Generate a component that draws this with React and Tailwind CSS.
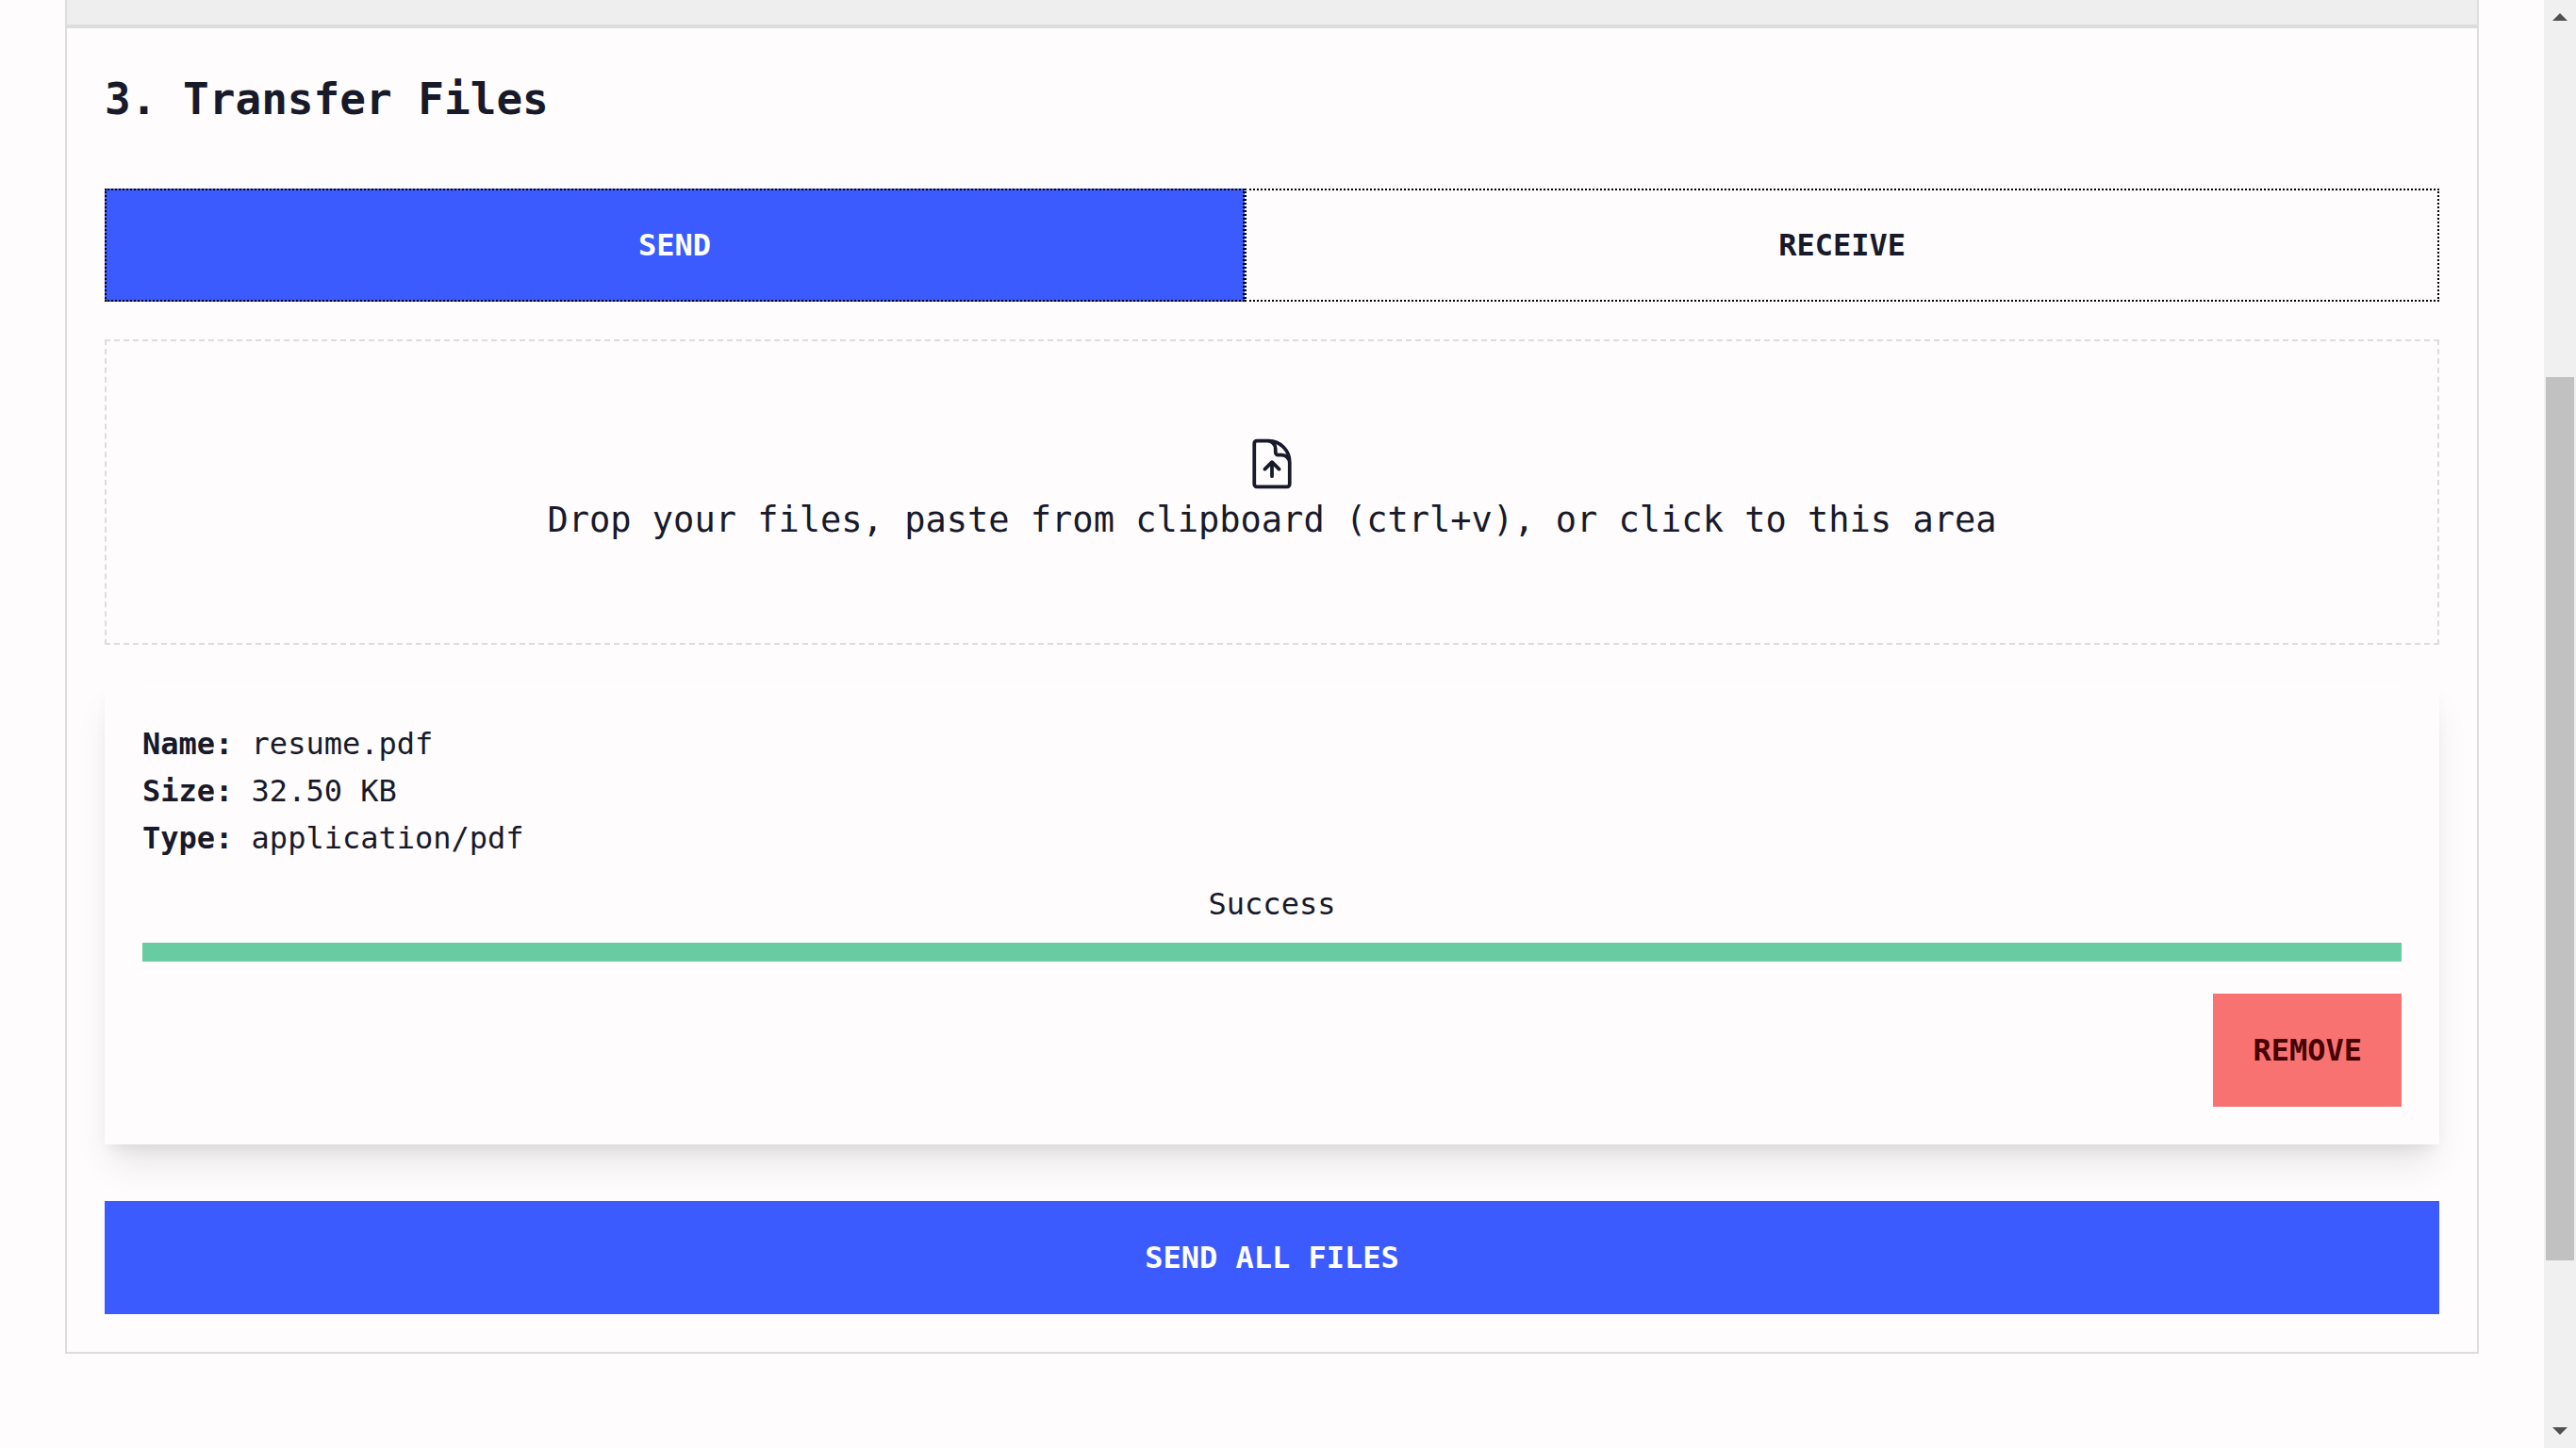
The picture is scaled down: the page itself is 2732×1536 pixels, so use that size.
const file = { name: 'resume.pdf', size: '32.50 KB', type: 'application/pdf' };

function UploadIcon() {
  return (
    <svg
      className="size-[60px]"
      viewBox="0 0 24 24"
      fill="none"
      stroke="currentColor"
      strokeWidth="1.5"
      strokeLinecap="round"
      strokeLinejoin="round"
      aria-hidden="true"
    >
      <path d="M19.5 14.25v-2.625a3.375 3.375 0 0 0-3.375-3.375h-1.5A1.125 1.125 0 0 1 13.5 7.125v-1.5a3.375 3.375 0 0 0-3.375-3.375H8.25m6.75 12-3-3m0 0-3 3m3-3v6m-1.5-15H5.625c-.621 0-1.125.504-1.125 1.125v17.25c0 .621.504 1.125 1.125 1.125h12.75c.621 0 1.125-.504 1.125-1.125V11.25a9 9 0 0 0-9-9Z" />
    </svg>
  );
}

function Tabs() {
  return (
    <div className="flex" role="tablist">
      <button
        type="button"
        role="tab"
        aria-selected="true"
        className="h-[120px] flex-auto border-2 border-dotted border-black bg-[#3b5bfe] px-10 font-bold text-white"
      >
        SEND
      </button>
      <button
        type="button"
        role="tab"
        aria-selected="false"
        className="h-[120px] flex-auto border-2 border-dotted border-black px-10 font-bold"
      >
        RECEIVE
      </button>
    </div>
  );
}

function DropZone() {
  return (
    <label className="mt-10 flex cursor-pointer flex-col items-center border-2 border-dashed border-[#dddddd] px-10 py-[100px] text-center">
      <UploadIcon />
      <span className="text-[37px] leading-[60px]">
        Drop your files, paste from clipboard (ctrl+v), or click to this area
      </span>
      <input type="file" multiple className="hidden" />
    </label>
  );
}

function Detail({ label, value }) {
  return (
    <p>
      <b>{label}:</b> {value}
    </p>
  );
}

function FileCard() {
  return (
    <article className="mt-10 flex flex-col bg-[#fefcfd] p-10 shadow-[0_25px_38px_-8px_rgba(0,0,0,0.1),0_10px_15px_-6px_rgba(0,0,0,0.08)]">
      <Detail label="Name" value={file.name} />
      <Detail label="Size" value={file.size} />
      <Detail label="Type" value={file.type} />
      <label htmlFor="progress" className="mt-5 text-center">
        Success
      </label>
      <progress
        id="progress"
        max="100"
        value="100"
        className="mt-4 block h-5 w-full appearance-none [&::-webkit-progress-bar]:bg-[#dddddd] [&::-webkit-progress-value]:bg-[#69cba1]"
      />
      <button
        type="button"
        className="mt-[34px] h-[120px] self-end border-2 border-[#f97272] bg-[#f97272] px-10 font-bold text-[#470000]"
      >
        REMOVE
      </button>
    </article>
  );
}

function ScrollBar() {
  return (
    <div className="sticky top-0 flex h-screen w-[34px] shrink-0 flex-col items-stretch bg-[#f0f0f0] px-0.5" aria-hidden="true">
      <div className="flex h-9 items-center justify-center">
        <svg className="h-2 w-4" viewBox="0 0 16 8">
          <path d="M8 0L16 8H0Z" fill="#505050" />
        </svg>
      </div>
      <div className="grow-[364]" />
      <div className="grow-[937] bg-[#c1c1c1]" />
      <div className="grow-[163]" />
      <div className="flex h-9 items-center justify-center">
        <svg className="h-2 w-4" viewBox="0 0 16 8">
          <path d="M0 0H16L8 8Z" fill="#505050" />
        </svg>
      </div>
    </div>
  );
}

export default function App() {
  return (
    <div className="flex min-h-screen bg-[#fefcfd] font-['DejaVu_Sans_Mono',monospace] text-[32px] leading-[50px] text-[#181a2a]">
      <main className="min-w-0 flex-1">
        <div className="mx-auto w-full max-w-[2560px]">
          <div className="h-7 border-x-2 border-b-2 border-[#dddddd] bg-[#eeeeee]" />
          <section className="border-2 border-[#dddddd] p-10">
            <h2 className="mb-[60px] text-[46px] leading-[70px] font-bold">3. Transfer Files</h2>
            <Tabs />
            <DropZone />
            <FileCard />
            <button type="button" className="mt-[60px] h-[120px] w-full bg-[#3b5bfe] font-bold text-white">
              SEND ALL FILES
            </button>
          </section>
        </div>
      </main>
      <ScrollBar />
    </div>
  );
}
